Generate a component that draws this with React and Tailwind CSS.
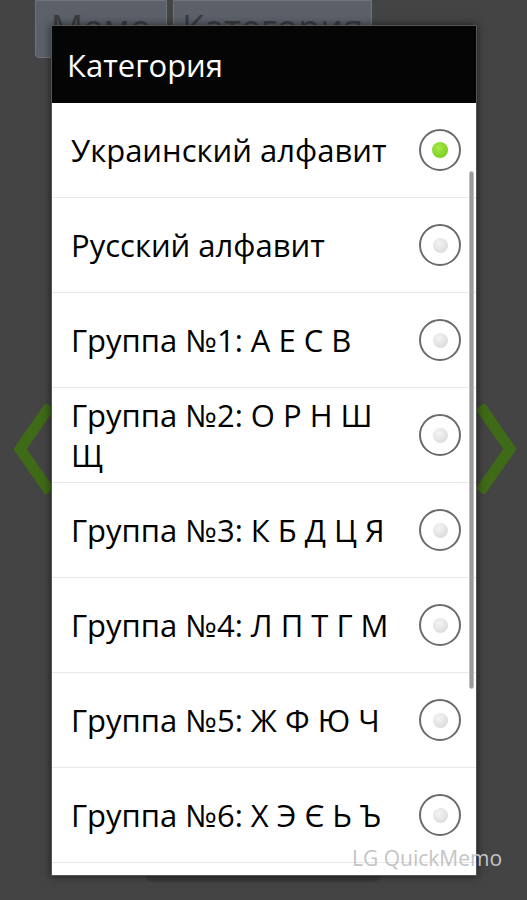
import React from 'react';

const items = [
  { label: 'Украинский алфавит', checked: true },
  { label: 'Русский алфавит' },
  { label: 'Группа №1: А Е С В' },
  { label: 'Группа №2: О Р Н Ш Щ' },
  { label: 'Группа №3: К Б Д Ц Я' },
  { label: 'Группа №4: Л П Т Г М' },
  { label: 'Группа №5: Ж Ф Ю Ч' },
  { label: 'Группа №6: Х Э Є Ь Ъ' },
];

const Radio = ({ checked }) => (
  <div className="w-[42px] h-[42px] rounded-full border-2 border-[#6b6b6b] bg-white flex items-center justify-center shrink-0">
    {checked ? (
      <div className="w-[16px] h-[16px] rounded-full bg-[radial-gradient(circle_at_40%_35%,#a6ea4a,#6fc414)]" />
    ) : (
      <div className="w-[15px] h-[15px] rounded-full bg-[radial-gradient(circle_at_40%_35%,#f4f4f4,#d4d4d4)]" />
    )}
  </div>
);

const App = () => {
  return (
    <div
      className="relative w-[527px] h-[900px] bg-[#444444] overflow-hidden"
      style={{ fontFamily: '"Open Sans", "DejaVu Sans", sans-serif' }}
    >
      {/* page behind the dialog */}
      <div className="flex gap-[6px] pl-[35px]">
        <div className="w-[132px] h-[58px] bg-[#5b6069] border border-[#70747b] rounded-b-[4px] flex justify-center pt-[2px] text-[36px] leading-[50px] text-[#383b40]">
          Мемо
        </div>
        <div className="w-[199px] h-[58px] bg-[#5b6069] border border-[#70747b] rounded-b-[4px] flex justify-center pt-[2px] text-[36px] leading-[50px] text-[#383b40]">
          Категория
        </div>
      </div>
      <svg className="absolute left-[14px] top-[404px]" width="40" height="90" viewBox="0 0 40 90">
        <path d="M36 2 L6 45 L36 88" fill="none" stroke="#3f6a17" strokeWidth="11" />
      </svg>
      <svg className="absolute left-[476px] top-[404px]" width="40" height="90" viewBox="0 0 40 90">
        <path d="M4 2 L34 45 L4 88" fill="none" stroke="#3f6a17" strokeWidth="11" />
      </svg>
      <div className="absolute left-[145px] top-[860px] w-[236px] h-[22px] bg-[#3a3a3a] rounded-b-[8px]" />

      {/* dialog */}
      <div className="absolute left-[51px] top-[25px] w-[426px] h-[851px] bg-white border border-[#555] shadow-[0_0_8px_rgba(0,0,0,0.6)] flex flex-col overflow-hidden">
        <div className="h-[77px] bg-[#050505] flex items-center pl-[15px] pt-[2px] text-white text-[31px] shrink-0">
          Категория
        </div>
        <div className="relative flex-1">
          {items.map((it, i) => (
            <div
              key={i}
              className="h-[95px] flex items-center pl-[19px] pr-[15px] border-b border-[#e8e8e8]"
            >
              <div className="flex-1 text-[31px] leading-[40px] text-black pr-[14px]">{it.label}</div>
              <Radio checked={it.checked} />
            </div>
          ))}
          <div className="absolute right-[2px] top-[68px] w-[5px] h-[518px] rounded-full bg-[#9a9a9a] border border-[#bdbdbd]" />
        </div>
      </div>

      <div className="absolute left-[352px] top-[843px] text-[21px] text-[#c4c4c4]">LG QuickMemo</div>
    </div>
  );
};

export default App;
